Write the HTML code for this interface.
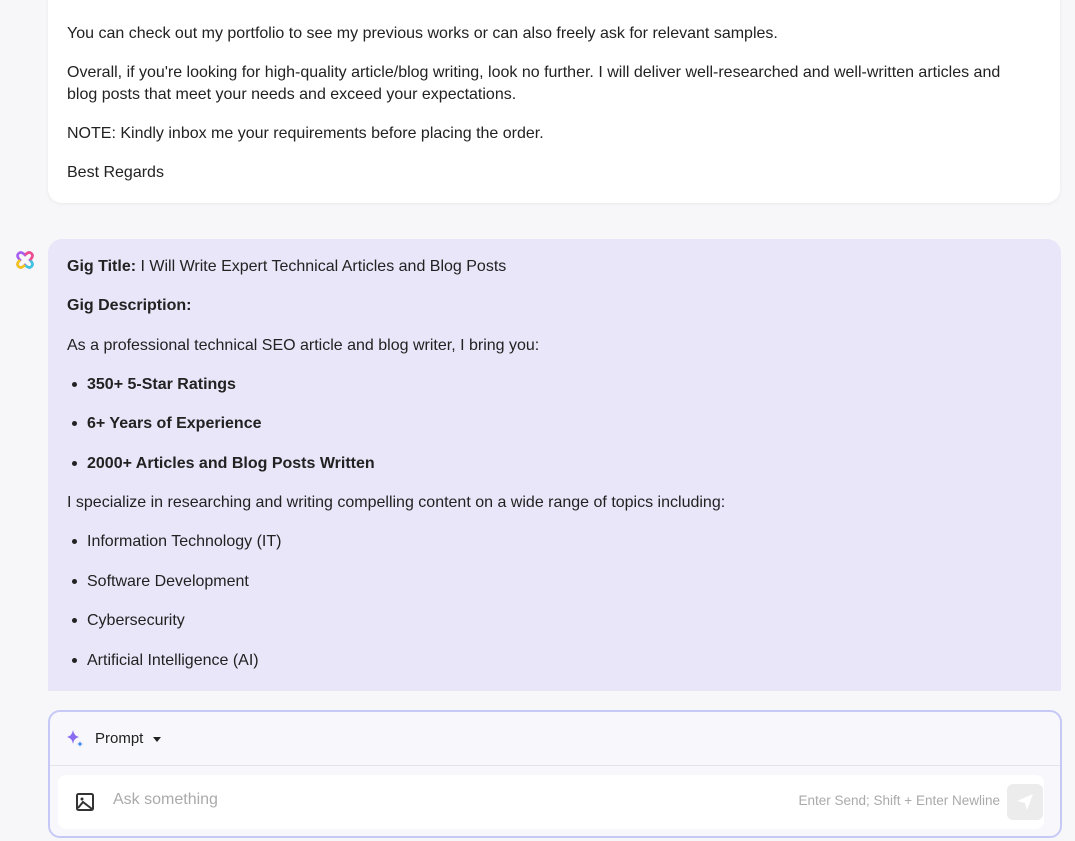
<!DOCTYPE html>
<html><head><style>
body{margin:0;width:1075px;height:841px;background:#f7f7f9;font-family:"Liberation Sans",sans-serif;color:#222;overflow:hidden;position:relative;font-size:16px}
.card1{position:absolute;left:48px;top:-20px;width:1012px;height:223px;background:#fff;border-radius:14px;box-shadow:0 1px 4px rgba(0,0,0,.06)}
.card2{position:absolute;left:48px;top:239px;width:1013px;height:452px;background:#e8e6f8;border-radius:14px 14px 0 0}
.t{position:absolute;left:67px;line-height:22px;white-space:nowrap}
b{font-weight:bold}
.dot{position:absolute;left:72px;width:5px;height:5px;border-radius:50%;background:#222}
.box{position:absolute;left:48px;top:710px;width:1010px;height:124px;border:2px solid #c6c9f6;border-radius:12px;background:#f7f7fc}
</style></head><body>
<div class="card1"></div>
<div class="t" style="top:23px">You can check out my portfolio to see my previous works or can also freely ask for relevant samples.</div>
<div class="t" style="top:62px">Overall, if you're looking for high-quality article/blog writing, look no further. I will deliver well-researched and well-written articles and<br>blog posts that meet your needs and exceed your expectations.</div>
<div class="t" style="top:123px">NOTE: Kindly inbox me your requirements before placing the order.</div>
<div class="t" style="top:162px">Best Regards</div>

<svg style="position:absolute;left:16px;top:251px" width="18" height="18" viewBox="0 0 18 18"><path d="M9 4 Q5 0 2.5 2.5 Q0 5 4 9 Q0 13 2.5 15.5 Q5 18 9 14 Q13 18 15.5 15.5 Q18 13 14 9 Q18 5 15.5 2.5 Q13 0 9 4Z" fill="none" stroke="#a75ff0" stroke-width="2.6"/><path d="M9 14 Q13 18 15.5 15.5 Q18 13 14 9" fill="none" stroke="#3cc6e0" stroke-width="2.6"/><path d="M9 14 Q5 18 2.5 15.5 Q0 13 4 9" fill="none" stroke="#f5c518" stroke-width="2.6"/><path d="M9 4 Q13 0 15.5 2.5 Q18 5 14 9" fill="none" stroke="#f04f8f" stroke-width="2.6"/></svg>

<div class="card2"></div>
<div class="t" style="top:256px"><b>Gig Title:</b> I Will Write Expert Technical Articles and Blog Posts</div>
<div class="t" style="top:295px"><b>Gig Description:</b></div>
<div class="t" style="top:335px">As a professional technical SEO article and blog writer, I bring you:</div>
<div class="dot" style="top:382px"></div><div class="t" style="left:87px;top:374px"><b>350+ 5-Star Ratings</b></div>
<div class="dot" style="top:421px"></div><div class="t" style="left:87px;top:413px"><b>6+ Years of Experience</b></div>
<div class="dot" style="top:461px"></div><div class="t" style="left:87px;top:453px"><b>2000+ Articles and Blog Posts Written</b></div>
<div class="t" style="top:492px">I specialize in researching and writing compelling content on a wide range of topics including:</div>
<div class="dot" style="top:539px"></div><div class="t" style="left:87px;top:531px">Information Technology (IT)</div>
<div class="dot" style="top:579px"></div><div class="t" style="left:87px;top:571px">Software Development</div>
<div class="dot" style="top:618px"></div><div class="t" style="left:87px;top:610px">Cybersecurity</div>
<div class="dot" style="top:658px"></div><div class="t" style="left:87px;top:650px">Artificial Intelligence (AI)</div>

<div class="box">
 <svg style="position:absolute;left:16px;top:17px" width="20" height="20" viewBox="0 0 20 20"><path d="M7 1 Q8 7 13 8 Q8 9 7 15 Q6 9 1 8 Q6 7 7 1Z" fill="#8a6cf0"/><path d="M14 12 Q14.5 14.5 17 15 Q14.5 15.5 14 18 Q13.5 15.5 11 15 Q13.5 14.5 14 12Z" fill="#4a8af0"/></svg>
 <div style="position:absolute;left:45px;top:18px;font-size:15px;color:#222">Prompt</div>
 <div style="position:absolute;left:103px;top:25px;border-left:4px solid transparent;border-right:4px solid transparent;border-top:5px solid #222"></div>
 <div style="position:absolute;left:0;right:0;top:53px;border-top:1px solid #e3e4f0"></div>
 <div style="position:absolute;left:8px;top:63px;width:986px;height:54px;background:#fff;border-radius:8px"></div>
 <svg style="position:absolute;left:25px;top:80px" width="20" height="20" viewBox="0 0 20 20"><rect x="2" y="2" width="16" height="16" rx="1.5" fill="none" stroke="#333" stroke-width="2"/><path d="M3 16 L8 10 L17 17" fill="none" stroke="#333" stroke-width="2"/><circle cx="7" cy="7" r="1.5" fill="#333"/></svg>
 <div style="position:absolute;left:63px;top:79px;font-size:16px;color:#aaa">Ask something</div>
 <div style="position:absolute;right:60px;top:81px;font-size:13.5px;color:#aaa">Enter Send; Shift + Enter Newline</div>
 <div style="position:absolute;left:957px;top:72px;width:36px;height:36px;background:#ececec;border-radius:6px"><svg style="position:absolute;left:9px;top:9px" width="18" height="18" viewBox="0 0 18 18"><path d="M1 8 L17 1 L11 17 L9 10Z" fill="#fff"/></svg></div>
</div>
</body></html>
